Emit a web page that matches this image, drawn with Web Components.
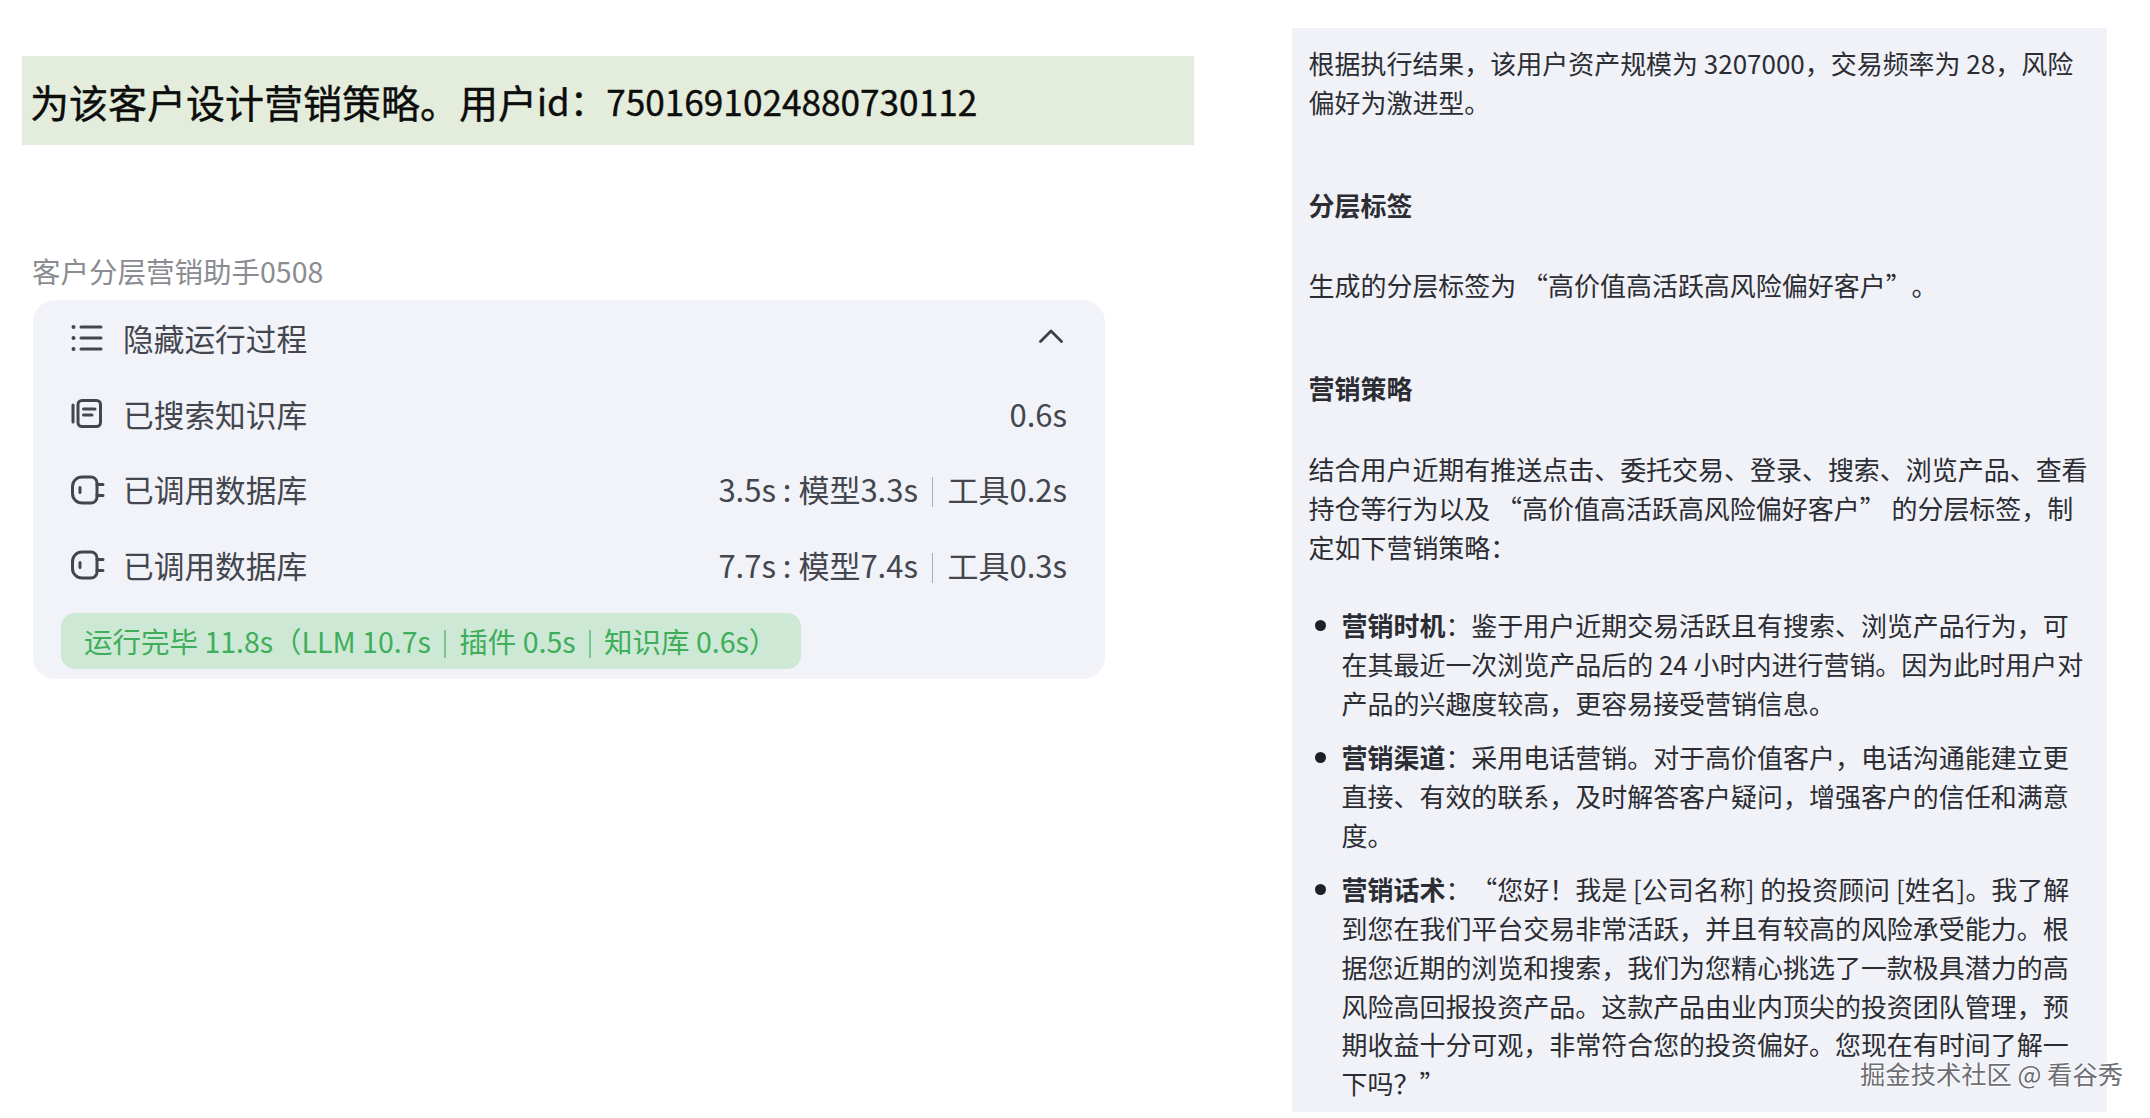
<!DOCTYPE html>
<html lang="zh">
<head>
<meta charset="utf-8">
<title>客户分层营销助手</title>
<style>
  html, body { margin: 0; background: #fff; }
  body { font-family: "Noto Sans CJK SC", "Noto Sans", sans-serif; text-spacing-trim: space-all; }
</style>
</head>
<body>
<promo-page>
  <ask-bar slot="left">为该客户设计营销策略。用户<span class="id">id：</span><span>7501691024880730112</span></ask-bar>
  <run-panel slot="left" title-text="客户分层营销助手0508">
    <run-row icon="list" label="隐藏运行过程" chevron></run-row>
    <run-row icon="book" label="已搜索知识库">0.6s</run-row>
    <run-row icon="plug" label="已调用数据库">3.5s : 模型3.3s<i></i>工具0.2s</run-row>
    <run-row icon="plug" label="已调用数据库">7.7s : 模型7.4s<i></i>工具0.3s</run-row>
    <run-summary slot="summary">运行完毕 11.8s（LLM 10.7s<i></i>插件 0.5s<i></i>知识库 0.6s）</run-summary>
  </run-panel>
  <answer-card slot="right">
    <p class="first">根据执行结果，该用户资产规模为 3207000，交易频率为 28，风险偏好为激进型。</p>
    <h4 class="h1">分层标签</h4>
    <p class="after-h">生成的分层标签为 “高价值高活跃高风险偏好客户”。</p>
    <h4 class="h2">营销策略</h4>
    <p class="after-h">结合用户近期有推送点击、委托交易、登录、搜索、浏览产品、查看持仓等行为以及 “高价值高活跃高风险偏好客户” 的分层标签，制定如下营销策略：</p>
    <answer-item class="list-start"><b>营销时机</b>：鉴于用户近期交易活跃且有搜索、浏览产品行为，可在其最近一次浏览产品后的 24 小时内进行营销。因为此时用户对产品的兴趣度较高，更容易接受营销信息。</answer-item>
    <answer-item><b>营销渠道</b>：采用电话营销。对于高价值客户，电话沟通能建立更直接、有效的联系，及时解答客户疑问，增强客户的信任和满意度。</answer-item>
    <answer-item><b>营销话术</b>：“您好！我是 [公司名称] 的投资顾问 [姓名]。我了解到您在我们平台交易非常活跃，并且有较高的风险承受能力。根据您近期的浏览和搜索，我们为您精心挑选了一款极具潜力的高风险高回报投资产品。这款产品由业内顶尖的投资团队管理，预期收益十分可观，非常符合您的投资偏好。您现在有时间了解一下吗？”</answer-item>
  </answer-card>
  <site-mark>掘金技术社区 @ 看谷秀</site-mark>
</promo-page>

<script>
const ICONS = {
  list: `<circle cx="2.500" cy="4" r="2" fill="currentColor"/><circle cx="2.500" cy="15" r="2" fill="currentColor"/><circle cx="2.500" cy="26" r="2" fill="currentColor"/>
         <path d="M10 4h20M10 15h20M10 26h20" fill="none" stroke="currentColor" stroke-width="3" stroke-linecap="round"/>`,
  book: `<g fill="none" stroke="currentColor" stroke-width="3" stroke-linecap="round" stroke-linejoin="round">
           <rect x="7" y="1.500" width="22.500" height="26" rx="4"/><path d="M2 6v17M12.500 10h11.500M12.500 16h8.500"/></g>`,
  plug: `<g fill="none" stroke="currentColor" stroke-width="3" stroke-linecap="round" stroke-linejoin="round">
           <path d="M11 2h9a6 6 0 0 1 6 6v14a6 6 0 0 1-6 6h-9A9.500 9.500 0 0 1 1.500 18.500v-7A9.500 9.500 0 0 1 11 2z"/><path d="M26 9.500h6M26 20.500h6M9 12.500v5"/></g>`
};

class PromoPage extends HTMLElement {
  constructor() {
    super();
    this.attachShadow({ mode: 'open' });
    this.shadowRoot.innerHTML = `
      <style>
        :host { display: flex; justify-content: space-between; position: relative; height: 1118px; box-sizing: border-box; padding: 28px 43px 6px 22px; overflow: hidden; }
        .left { width: 1172px; padding-top: 28px; }
        .right { width: 815px; display: flex; }
      </style>
      <div class="left"><slot name="left"></slot></div>
      <div class="right"><slot name="right"></slot></div>
      <slot></slot>`;
  }
}

class AskBar extends HTMLElement {
  constructor() {
    super();
    this.attachShadow({ mode: 'open' });
    this.shadowRoot.innerHTML = `
      <style>
        :host { display: flex; align-items: center; height: 89px; padding-left: 8px; background: #e4ecdb; color: #0c0d0c; font-size: 39px; white-space: nowrap; -webkit-text-stroke: 0.4px #0c0d0c; }
        ::slotted(span) { font-size: 35.200px; }
        ::slotted(.id) { font-size: 36.500px; }
      </style>
      <slot></slot>`;
  }
}

class RunPanel extends HTMLElement {
  constructor() {
    super();
    this.attachShadow({ mode: 'open' });
    this.shadowRoot.innerHTML = `
      <style>
        :host { display: block; width: 1072px; margin: 101px 0 0 11px; }
        .title { color: #8a8c92; font-size: 28.500px; line-height: 50px; margin: 0 0 4px -1px; }
        .box { background: #f1f3f8; border-radius: 22px; padding: 1px 38px 10px 39px; }
        .summary { margin: 9px 0 0 -11px; }
      </style>
      <div class="title"></div>
      <div class="box">
        <slot></slot>
        <div class="summary"><slot name="summary"></slot></div>
      </div>`;
    this.shadowRoot.querySelector('.title').textContent = this.getAttribute('title-text');
  }
}

class RunRow extends HTMLElement {
  constructor() {
    super();
    this.attachShadow({ mode: 'open' });
    const chevron = this.hasAttribute('chevron')
      ? `<svg class="chev" width="24" height="14" viewBox="0 0 24 14"><path d="M1.500 12.500 12 2l10.500 10.500" fill="none" stroke="#3c3f47" stroke-width="2.800" stroke-linecap="round" stroke-linejoin="round"/></svg>`
      : '';
    this.shadowRoot.innerHTML = `
      <style>
        :host { display: flex; align-items: center; height: 75.700px; box-sizing: border-box; padding-bottom: 3px; color: #43464e; font-size: 31px; white-space: nowrap; }
        svg.icon { width: 34px; height: 30px; flex: none; margin: 2px 18px 0 -1px; }
        .label { flex: 1; font-size: 30.700px; }
        .chev { margin: -2px 4px 0 0; }
      </style>
      <svg class="icon" viewBox="0 0 34 30">${ICONS[this.getAttribute('icon')]}</svg>
      <span class="label">${this.getAttribute('label')}</span>
      ${chevron}
      <span class="meta"><slot></slot></span>`;
  }
  connectedCallback() {
    // separators passed as <i> in light DOM
    this.querySelectorAll('i').forEach(el => {
      el.style.cssText = 'display:inline-block;width:1.500px;height:30px;background:#a9acb3;margin:0 14px;vertical-align:-5px';
    });
  }
}

class RunSummary extends HTMLElement {
  constructor() {
    super();
    this.attachShadow({ mode: 'open' });
    this.shadowRoot.innerHTML = `
      <style>
        :host { display: flex; align-items: center; width: 740px; height: 56px; box-sizing: border-box; padding-left: 23px; background: #cde8d5; border-radius: 14px; color: #3fae5a; font-size: 28.500px; white-space: nowrap; }
      </style>
      <span><slot></slot></span>`;
  }
  connectedCallback() {
    this.querySelectorAll('i').forEach(el => {
      el.style.cssText = 'display:inline-block;width:1.500px;height:28px;background:#7cc491;margin:0 13.500px;vertical-align:-5px';
    });
  }
}

class AnswerCard extends HTMLElement {
  constructor() {
    super();
    this.attachShadow({ mode: 'open' });
    this.shadowRoot.innerHTML = `
      <style>
        :host { display: block; width: 815px; box-sizing: border-box; padding: 16px 17px 0 16.500px; background: #f0f2f8; color: #2c2d33; font-size: 25.970px; line-height: 38.800px; }
        ::slotted(p), ::slotted(h4) { margin: 0; font-size: 25.970px; }
        ::slotted(h4) { font-weight: 700; }
        ::slotted(.h1), ::slotted(.h2) { margin-top: 64px; }
        ::slotted(.after-h) { margin-top: 42px; }
        ::slotted(.list-start) { margin-top: 40px; }
      </style>
      <slot></slot>`;
  }
}

class AnswerItem extends HTMLElement {
  constructor() {
    super();
    this.attachShadow({ mode: 'open' });
    this.shadowRoot.innerHTML = `
      <style>
        :host { display: grid; grid-template-columns: 33px 1fr; margin-bottom: 15.500px; }
        .dot { width: 11px; height: 11px; margin: 14px 0 0 6px; border-radius: 50%; background: #1f2025; }
      </style>
      <span class="dot"></span>
      <div><slot></slot></div>`;
  }
}

class SiteMark extends HTMLElement {
  constructor() {
    super();
    this.attachShadow({ mode: 'open' });
    this.shadowRoot.innerHTML = `
      <style>
        :host { position: absolute; right: 27px; top: 1055px; color: #6d6e73; font-size: 25.300px; line-height: 36px; white-space: nowrap;
          text-shadow: 1px 0 0 rgba(255,255,255,.8), -1px 0 0 rgba(255,255,255,.8), 0 1px 0 rgba(255,255,255,.8), 0 -1px 0 rgba(255,255,255,.8); }
      </style>
      <slot></slot>`;
  }
}

customElements.define('promo-page', PromoPage);
customElements.define('ask-bar', AskBar);
customElements.define('run-panel', RunPanel);
customElements.define('run-row', RunRow);
customElements.define('run-summary', RunSummary);
customElements.define('answer-card', AnswerCard);
customElements.define('answer-item', AnswerItem);
customElements.define('site-mark', SiteMark);
</script>
</body>
</html>
